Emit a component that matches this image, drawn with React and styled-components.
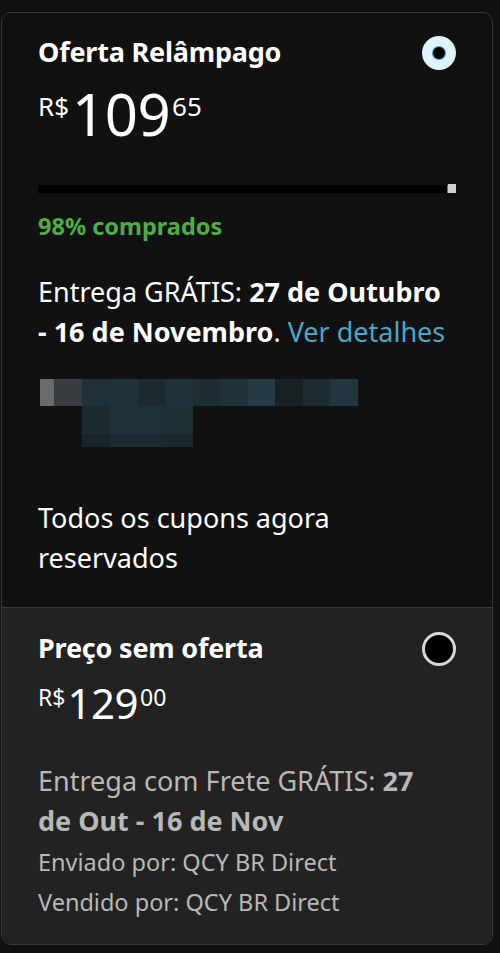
import React from 'react';
import styled, { createGlobalStyle } from 'styled-components';

const GlobalStyle = createGlobalStyle`
    html, body {
        margin: 0;
        padding: 0;
        background: #111111;
    }
    body {
        font-family: 'Noto Sans', 'Open Sans', sans-serif;
        color: #ffffff;
    }
`;

const Page = styled.div`
    padding: 12px 7px 7px 1px;
`;

const Card = styled.div`
    border: 1px solid #3a3a3a;
    border-radius: 10px;
    overflow: hidden;
    background: #111111;
`;

const Option = styled.div`
    padding: ${({ padding }) => padding || '20px 36px 29px 36px'};
    background: ${({ backgroundColor }) => backgroundColor || '#111111'};
    border-top: ${({ divided }) => (divided ? '1px solid #3a3a3a' : 'none')};
`;

const Header = styled.div`
    display: flex;
    justify-content: space-between;
    align-items: flex-start;
`;

const Title = styled.h2`
    margin: 0;
    font-size: 27px;
    font-weight: 700;
    line-height: 38px;
    letter-spacing: -0.2px;
`;

const Radio = styled.span`
    width: 34px;
    height: 34px;
    box-sizing: border-box;
    border-radius: 50%;
    margin-top: 3px;
    display: flex;
    align-items: center;
    justify-content: center;
    background: ${({ checked }) => (checked ? '#dff3fa' : '#000000')};
    border: ${({ checked }) => (checked ? 'none' : '3px solid #d8d8d8')};

    &::after {
        content: '';
        display: ${({ checked }) => (checked ? 'block' : 'none')};
        width: 12px;
        height: 12px;
        border-radius: 50%;
        background: #000;
        box-shadow: 0 0 0 1px #3fa8c8;
    }
`;

const Price = styled.div`
    display: flex;
    align-items: flex-start;
    margin-top: ${({ small }) => (small ? '15px' : '14px')};
    line-height: 1;
`;

const Currency = styled.span`
    font-size: ${({ small }) => (small ? '23px' : '26px')};
    margin-top: ${({ small }) => (small ? '4px' : '8px')};
    margin-right: ${({ small }) => (small ? '2px' : '3px')};
`;

const Whole = styled.span`
    font-size: ${({ small }) => (small ? '42px' : '58px')};
    letter-spacing: -0.5px;
`;

const Fraction = styled.span`
    font-size: ${({ small }) => (small ? '23px' : '26px')};
    margin-top: ${({ small }) => (small ? '4px' : '8px')};
    margin-left: 2px;
`;

const Progress = styled.div`
    display: flex;
    align-items: flex-end;
    margin-top: 41px;
`;

const Track = styled.div`
    flex: 1;
    height: 8px;
    background: #000000;
    border-right: 1px solid #6a6a6a;
`;

const Knob = styled.div`
    width: 8px;
    height: 9px;
    background: #d0d0d0;
`;

const Claimed = styled.div`
    margin-top: 17px;
    color: #4caf44;
    font-size: 23.5px;
    font-weight: 700;
`;

const Delivery = styled.p`
    margin: ${({ margin }) => margin || '30px 0 0'};
    max-width: ${({ maxWidth }) => maxWidth || 'none'};
    font-size: 27px;
    line-height: 40px;
    color: ${({ color }) => color || '#ffffff'};

    b {
        font-weight: 700;
    }
`;

const Link = styled.a`
    color: #4ba6c8;
    text-decoration: none;
`;

const Mosaic = styled.svg`
    display: block;
    margin: 27px 0 0 2px;
`;

const Note = styled.p`
    margin: 51px 0 0;
    font-size: 27px;
    line-height: 40px;
    width: 340px;
`;

const Sellers = styled.div`
    margin-top: 1px;
`;

const Seller = styled.div`
    font-size: 23.5px;
    line-height: 40px;
    color: #b8b8b8;
`;

const blocks = [
    [0, 0, 14, 27, '#6a6a6a'],
    [14, 0, 28, 27, '#3a3d40'],
    [42, 0, 28, 27, '#1f3038'],
    [70, 0, 28, 27, '#20333b'],
    [98, 0, 27, 27, '#1a2a30'],
    [125, 0, 28, 27, '#1f3139'],
    [153, 0, 27, 27, '#1d2d33'],
    [180, 0, 28, 27, '#1f313b'],
    [208, 0, 27, 27, '#243a44'],
    [235, 0, 28, 27, '#172124'],
    [263, 0, 27, 27, '#1d2c33'],
    [290, 0, 28, 27, '#213640'],
    [42, 27, 28, 28, '#1c2b32'],
    [70, 27, 28, 28, '#203239'],
    [98, 27, 27, 28, '#1f3138'],
    [125, 27, 28, 28, '#1e2f36'],
    [42, 55, 28, 13, '#182429'],
    [70, 55, 28, 13, '#1b2a31'],
    [98, 55, 27, 13, '#1b2a30'],
    [125, 55, 28, 13, '#1a282e'],
];

function PriceTag({ whole, fraction, small }) {
    return (
        <Price small={small}>
            <Currency small={small}>R$</Currency>
            <Whole small={small}>{whole}</Whole>
            <Fraction small={small}>{fraction}</Fraction>
        </Price>
    );
}

export default function App() {
    return (
        <Page>
            <GlobalStyle />
            <Card>
                <Option>
                    <Header>
                        <Title>Oferta Relâmpago</Title>
                        <Radio checked />
                    </Header>
                    <PriceTag whole="109" fraction="65" />
                    <Progress>
                        <Track />
                        <Knob />
                    </Progress>
                    <Claimed>98% comprados</Claimed>
                    <Delivery>
                        Entrega GRÁTIS: <b>27 de Outubro - 16 de Novembro</b>. <Link>Ver detalhes</Link>
                    </Delivery>
                    <Mosaic width="318" height="68" viewBox="0 0 318 68">
                        {blocks.map(([x, y, w, h, fill], i) => (
                            <rect key={i} x={x} y={y} width={w} height={h} fill={fill} />
                        ))}
                    </Mosaic>
                    <Note>Todos os cupons agora reservados</Note>
                </Option>
                <Option backgroundColor="#222222" divided padding="21px 36px 22px 36px">
                    <Header>
                        <Title>Preço sem oferta</Title>
                        <Radio />
                    </Header>
                    <PriceTag whole="129" fraction="00" small />
                    <Delivery color="#b8b8b8" margin="37px 0 0" maxWidth="400px">
                        Entrega com Frete GRÁTIS: <b>27 de Out - 16 de Nov</b>
                    </Delivery>
                    <Sellers>
                        <Seller>Enviado por: QCY BR Direct</Seller>
                        <Seller>Vendido por: QCY BR Direct</Seller>
                    </Sellers>
                </Option>
            </Card>
        </Page>
    );
}
